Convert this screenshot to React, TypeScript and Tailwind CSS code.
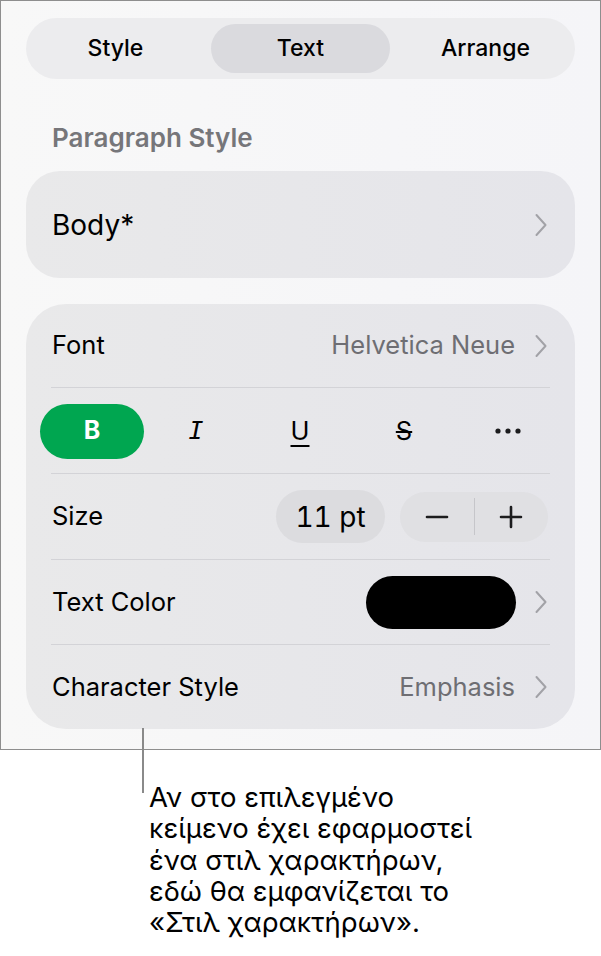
import React from "react";

const font = { fontFamily: "Inter, 'Noto Sans', sans-serif" };

// small right chevron used at the end of rows
function Chevron() {
  return (
    <svg width="12" height="24" viewBox="0 0 12 24" fill="none" stroke="#a2a2a7" strokeWidth="2" strokeLinecap="round" strokeLinejoin="round">
      <path d="M1.5 2 L10.5 12 L1.5 22" />
    </svg>
  );
}

export default function App() {
  return (
    <div className="relative w-[601px] bg-white text-black" style={font}>
      {/* Inspector panel */}
      <div className="h-[750px] w-[601px] border border-[#8e8e8e] bg-gradient-to-r from-[#f8f8f8] to-[#f5f5f8] px-[25px] pt-[17px]">
        {/* Tabs */}
        <div className="flex h-[61px] w-[549px] rounded-full bg-[#ececee] text-[23px] font-medium">
          <div className="flex flex-1 items-center justify-center">Style</div>
          <div className="flex flex-1 p-[6px]">
            <div className="flex flex-1 items-center justify-center rounded-full bg-[#dadade]">Text</div>
          </div>
          <div className="flex flex-1 items-center justify-center">Arrange</div>
        </div>

        <div className="flex h-[92px] items-center pl-[26px] pt-[24px] text-[26px] font-semibold text-[#76767a]">
          Paragraph Style
        </div>

        {/* Paragraph style card */}
        <div className="flex h-[107px] items-center justify-between rounded-[34px] bg-gradient-to-r from-[#e9e9ea] to-[#e5e5ea] pl-[26px] pr-[28px]">
          <span className="text-[28px]">Body*</span>
          <Chevron />
        </div>

        {/* Font settings card */}
        <div className="mt-[26px] h-[425px] rounded-[40px] bg-gradient-to-r from-[#e9e9ea] to-[#e5e5ea] text-[25.5px]">
          <div className="mx-[25px] flex h-[84px] items-center justify-between border-b border-[#d3d3d7] pl-[1px] pr-[3px]">
            <span>Font</span>
            <div className="flex items-center gap-[20px]">
              <span className="text-[#6e6e73]">Helvetica Neue</span>
              <Chevron />
            </div>
          </div>

          <div className="relative h-[86px]">
            <div className="absolute bottom-0 left-[25px] right-[25px] border-b border-[#d3d3d7]" />
            <div className="flex h-full items-center pl-[14px]">
              <div className="flex h-[55px] w-[104px] items-center justify-center rounded-full bg-[#00a650] text-[25px] font-bold text-white">B</div>
              <div className="flex w-[104px] justify-center">
                <span className="text-[25px] italic" style={{ fontFamily: "'DejaVu Sans Mono', monospace" }}>I</span>
              </div>
              <div className="flex w-[104px] justify-center">
                <span className="underline decoration-[2px] underline-offset-[5px]">U</span>
              </div>
              <div className="flex w-[104px] justify-center">
                <span className="line-through decoration-[2px]">S</span>
              </div>
              <div className="flex w-[104px] justify-center">
                <svg width="26" height="6" viewBox="0 0 26 6" fill="#1c1c1e">
                  <circle cx="3" cy="3" r="2.6" />
                  <circle cx="13" cy="3" r="2.6" />
                  <circle cx="23" cy="3" r="2.6" />
                </svg>
              </div>
            </div>
          </div>

          <div className="mx-[25px] flex h-[86px] items-center justify-between border-b border-[#d3d3d7] pl-[1px] pr-[2px]">
            <span>Size</span>
            <div className="flex items-center gap-[15px]">
              <div className="flex h-[53px] w-[109px] items-center justify-center rounded-full bg-[#dcdcdf] text-[28px] tabular-nums">11 pt</div>
              <div className="flex h-[50px] w-[148px] items-center rounded-full bg-[#e0e0e3]">
                <div className="flex flex-1 justify-center">
                  <svg width="24" height="24" viewBox="0 0 24 24" stroke="#1c1c1e" strokeWidth="2.6" strokeLinecap="round">
                    <path d="M2 12 H22" />
                  </svg>
                </div>
                <div className="h-[37px] w-px bg-[#c6c6ca]" />
                <div className="flex flex-1 justify-center">
                  <svg width="24" height="24" viewBox="0 0 24 24" stroke="#1c1c1e" strokeWidth="2.6" strokeLinecap="round">
                    <path d="M2 12 H22 M12 2 V22" />
                  </svg>
                </div>
              </div>
            </div>
          </div>

          <div className="mx-[25px] flex h-[85px] items-center justify-between border-b border-[#d3d3d7] pl-[1px] pr-[3px]">
            <span>Text Color</span>
            <div className="flex items-center gap-[19px]">
              <div className="h-[53px] w-[150px] rounded-full bg-black" />
              <Chevron />
            </div>
          </div>

          <div className="mx-[25px] flex h-[84px] items-center justify-between pl-[1px] pr-[3px]">
            <span>Character Style</span>
            <div className="flex items-center gap-[20px]">
              <span className="text-[#6e6e73]">Emphasis</span>
              <Chevron />
            </div>
          </div>
        </div>
      </div>

      {/* Callout */}
      <div className="absolute left-[142px] top-[728px] h-[65px] w-[2px] bg-[#8a8a8a]" />
      <div className="pb-[14px] pl-[149px] pt-[32px] text-[27.5px] leading-[31.3px]">
        Αν στο επιλεγμένο
        <br />
        κείμενο έχει εφαρμοστεί
        <br />
        ένα στιλ χαρακτήρων,
        <br />
        εδώ θα εμφανίζεται το
        <br />
        «Στιλ χαρακτήρων».
      </div>
    </div>
  );
}
